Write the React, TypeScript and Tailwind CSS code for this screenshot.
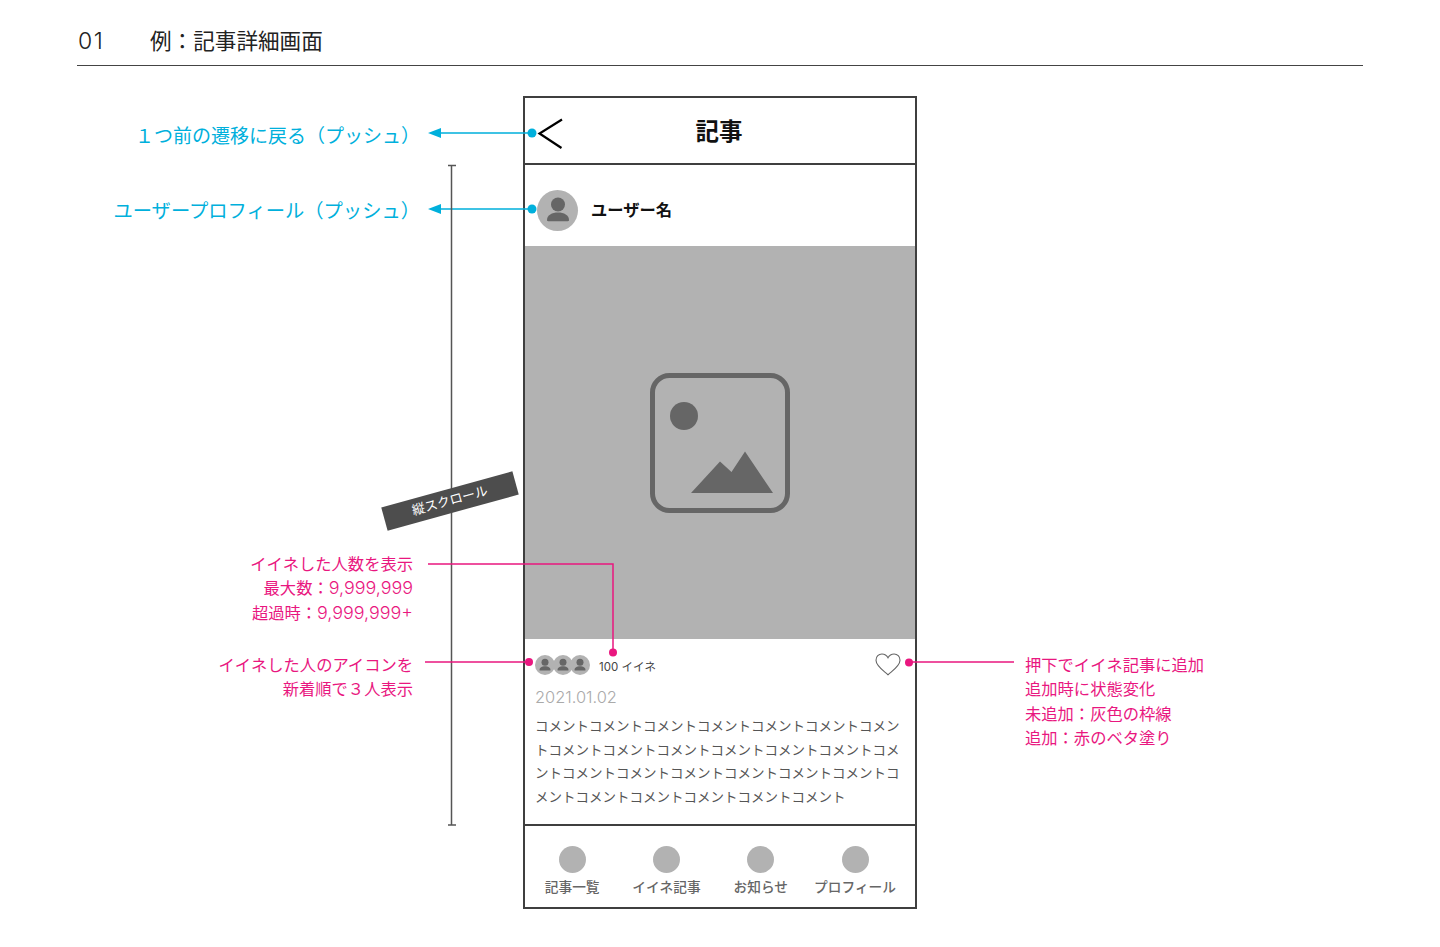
const PINK = "#e9177f";
const CYAN = "#00b0dc";

const COMMENT = "コメント".repeat(26);

const tabs = ["記事一覧", "イイネ記事", "お知らせ", "プロフィール"];

const Person = ({ size }: { size: number }) => (
  <svg width={size} height={size} viewBox="0 0 40 40" fill="#666666">
    <circle cx="20" cy="14.5" r="7" />
    <path d="M9 30c0-5 5-7.5 11-7.5S31 25 31 30c0 .8-.5 1.2-1.2 1.2H10.2C9.5 31.200 9 30.800 9 30z" />
  </svg>
);

const Avatar = ({ d, icon }: { d: string; icon: number }) => (
  <div className={`${d} flex shrink-0 items-center justify-center rounded-full bg-[#b2b2b2]`}>
    <Person size={icon} />
  </div>
);

const Connectors = () => (
  <svg className="absolute top-0 left-0" width="1440" height="947" fill="none">
    {/* back + profile arrows */}
    <path d="M436 133H532M436 209H532" stroke={CYAN} strokeWidth="1.500" />
    <path d="M428 133l13-5v10zM428 209l13-5v10z" fill={CYAN} />
    <circle cx="532" cy="133" r="4.500" fill={CYAN} />
    <circle cx="532" cy="209" r="4.500" fill={CYAN} />
    {/* scroll range */}
    <path d="M451.500 165V825M448 165.500H456M448 825H456" stroke="#555555" strokeWidth="1.500" />
    {/* like notes */}
    <path d="M428 564H613V652M425 662H529M909 662H1014" stroke={PINK} strokeWidth="1.500" />
    <circle cx="613" cy="652.500" r="4" fill={PINK} />
    <circle cx="529" cy="662" r="4" fill={PINK} />
    <circle cx="909" cy="662.500" r="4" fill={PINK} />
  </svg>
);

const Phone = () => (
  <div className="flex h-[813px] w-[394px] flex-col border-2 border-[#3f3f3f] bg-white">
    <div className="relative flex h-[67px] shrink-0 items-center justify-center border-b-2 border-[#3f3f3f] pt-[2px] pr-[2px]">
      <svg className="absolute top-[19px] left-[11px]" width="28" height="32" viewBox="0 0 28 32" fill="none">
        <path d="M26 2.500L3.500 16.500 25.500 31" stroke="#000000" strokeWidth="2.200" />
      </svg>
      <span className="text-[23.500px] leading-none font-bold text-[#111111]">記事</span>
    </div>
    <div className="flex h-[81px] shrink-0 items-center gap-[13px] pt-[9px] pl-[12px]">
      <Avatar d="h-[41px] w-[41px]" icon={40} />
      <span className="text-[16.300px] font-bold text-[#111111]">ユーザー名</span>
    </div>
    <div className="flex h-[393px] shrink-0 items-center justify-center bg-[#b2b2b2]">
      <svg width="142" height="142" viewBox="0 0 142 142" fill="none">
        <rect x="3.500" y="3.500" width="135" height="135" rx="17" stroke="#666666" strokeWidth="5" />
        <circle cx="35" cy="44" r="14" fill="#666666" />
        <path d="M42 121L71 89.500 82.500 100 96 79.500 124 121z" fill="#666666" />
      </svg>
    </div>
    <div className="flex flex-1 flex-col pl-[10px]">
      <div className="flex h-[50px] shrink-0 items-center justify-between pt-[2px]">
        <div className="flex items-center">
          <div className="flex -space-x-[2.500px]">
            <Avatar d="h-[20px] w-[20px]" icon={20} />
            <Avatar d="h-[20px] w-[20px]" icon={20} />
            <Avatar d="h-[20px] w-[20px]" icon={20} />
          </div>
          <span className="ml-[9px] pt-[6px] text-[11.500px] text-[#444444]">100 イイネ</span>
        </div>
        <svg className="mr-[14px] mb-[1px]" width="26" height="23" viewBox="0 0 26 23" fill="none">
          <path
            d="M13 21.800C9 18 1 13 1 7.200 1 3.500 3.700 1 6.900 1 9.500 1 11.800 2.500 13 4.800 14.200 2.500 16.500 1 19.100 1 22.300 1 25 3.500 25 7.200 25 13 17 18 13 21.800z"
            stroke="#666666"
            strokeWidth="1.100"
          />
        </svg>
      </div>
      <div className="-mt-[2px] text-[16.400px] leading-[20px] font-light text-[#aaaaaa]">2021.01.02</div>
      <p className="mt-[8px] w-[367px] text-[13.500px] leading-[23.600px] break-all text-[#555555]">{COMMENT}</p>
    </div>
    <div className="grid h-[83px] shrink-0 grid-cols-[repeat(4,94.300px)] border-t-2 border-[#3f3f3f] pt-[20px]">
      {tabs.map((t) => (
        <div key={t} className="flex flex-col items-center gap-[4px]">
          <div className="h-[27px] w-[27px] rounded-full bg-[#b2b2b2]" />
          <span className="text-[13.700px] leading-[20px] font-medium whitespace-nowrap text-[#666666]">{t}</span>
        </div>
      ))}
    </div>
  </div>
);

export default function App() {
  return (
    <div
      className="relative h-[947px] w-[1440px] overflow-hidden bg-white"
      style={{ fontFamily: '"Inter", "Noto Sans CJK JP", sans-serif' }}
    >
      <div className="mx-[77px] flex h-[66px] items-center border-b border-[#444444] pt-[17px] text-[#222222]">
        <span className="w-[73px] pl-[1px] text-[23px] font-light tracking-[1.500px]">01</span>
        <span className="text-[21.600px]">例：記事詳細画面</span>
      </div>

      <div className="mt-[30px] flex justify-center">
        <Phone />
      </div>

      <Connectors />

      <div className="absolute top-[124px] right-[1020px] text-[19px] leading-[26px] whitespace-nowrap text-[#00b0dc]">
        １つ前の遷移に戻る（プッシュ）
      </div>
      <div className="absolute top-[198px] right-[1020px] text-[19.300px] leading-[26px] whitespace-nowrap text-[#00b0dc]">
        ユーザープロフィール（プッシュ）
      </div>

      <div className="absolute top-[489px] left-[382px] flex h-[24px] w-[136px] -rotate-[15.400deg] items-center justify-center bg-[#4d4d4d] text-[13px] text-white">
        縦スクロール
      </div>

      <div className="absolute top-[552px] right-[1027px] text-right text-[16.300px] leading-[24.400px] whitespace-nowrap text-[#e9177f]">
        <div>イイネした人数を表示</div>
        <div>
          最大数：<span className="text-[17.900px] font-light">9,999,999</span>
        </div>
        <div>
          超過時：<span className="text-[17.900px] font-light">9,999,999+</span>
        </div>
      </div>
      <div className="absolute top-[653px] right-[1027px] text-right text-[16.300px] leading-[24.400px] whitespace-nowrap text-[#e9177f]">
        <div>イイネした人のアイコンを</div>
        <div>新着順で３人表示</div>
      </div>
      <div className="absolute top-[653px] left-[1025px] text-[16.300px] leading-[24.400px] whitespace-nowrap text-[#e9177f]">
        <div>押下でイイネ記事に追加</div>
        <div>追加時に状態変化</div>
        <div>未追加：灰色の枠線</div>
        <div>追加：赤のベタ塗り</div>
      </div>
    </div>
  );
}
